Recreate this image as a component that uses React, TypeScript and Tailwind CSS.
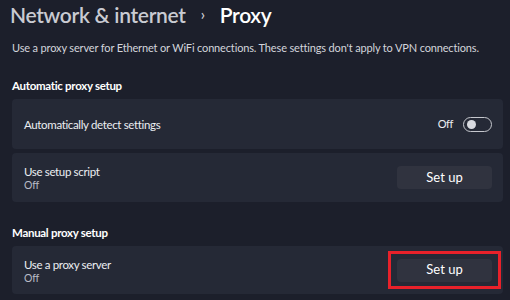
import React from 'react';

const SetUpButton = () => (
  <button className="flex h-[23px] w-[95px] items-center justify-center rounded-[4px] bg-[#30333f] text-[13px] text-white">
    Set up
  </button>
);

const SettingCard = ({
  title,
  sub,
  height,
  children,
}: {
  title: string;
  sub?: string;
  height: string;
  children: React.ReactNode;
}) => (
  <div className={`flex items-center justify-between rounded-[4px] bg-[#252936] pl-3 pr-[11px] ${height}`}>
    <div className="flex flex-col">
      <span className="text-[11.5px] leading-[15px] tracking-[-0.35px] text-[#eceef2]">{title}</span>
      {sub && <span className="text-[10.5px] leading-[12px] text-[#b9bcc6]">{sub}</span>}
    </div>
    {children}
  </div>
);

const App = () => {
  return (
    <div
      className="h-[300px] w-[510px] overflow-hidden bg-[#1c1f2b] pl-3 pr-[7px]"
      style={{ fontFamily: 'Lato, "Noto Sans", sans-serif' }}
    >
      <h1 className="-ml-[2px] flex h-[29px] items-center gap-[15px] text-[21px] font-semibold tracking-[-0.3px]">
        <span className="text-[#c9cbd2]">Network &amp; internet</span>
        <span className="text-[15px] text-[#c9cbd2]">›</span>
        <span className="text-white">Proxy</span>
      </h1>
      <p className="mt-[11px] whitespace-nowrap text-[11px] leading-[15px] tracking-[-0.15px] text-[#d3d5db]">
        Use a proxy server for Ethernet or WiFi connections. These settings don't apply to VPN connections.
      </p>
      <h2 className="mt-[23px] text-[11.5px] font-bold leading-[15px] tracking-[-0.3px] text-white">
        Automatic proxy setup
      </h2>
      <div className="mt-[6px] flex flex-col gap-1">
        <SettingCard title="Automatically detect settings" height="h-[50px]">
          <div className="flex items-center gap-[10px]">
            <span className="text-[11px] tracking-[-0.4px] text-[#eceef2]">Off</span>
            <div className="flex h-[15px] w-[29px] items-center rounded-full border border-[#c5c7cd] px-[3px]">
              <div className="h-[9px] w-[9px] rounded-full bg-[#d8dae0]" />
            </div>
          </div>
        </SettingCard>
        <SettingCard title="Use setup script" sub="Off" height="h-[49px]">
          <SetUpButton />
        </SettingCard>
      </div>
      <h2 className="mt-[23px] text-[11.5px] font-bold leading-[15px] tracking-[-0.3px] text-white">
        Manual proxy setup
      </h2>
      <div className="mt-[6px]">
        <SettingCard title="Use a proxy server" sub="Off" height="h-[48px]">
          <div className="-mr-[9px] flex h-[38px] w-[113px] items-center justify-center border-[3px] border-[#e8212a]">
            <SetUpButton />
          </div>
        </SettingCard>
      </div>
    </div>
  );
};

export default App;
